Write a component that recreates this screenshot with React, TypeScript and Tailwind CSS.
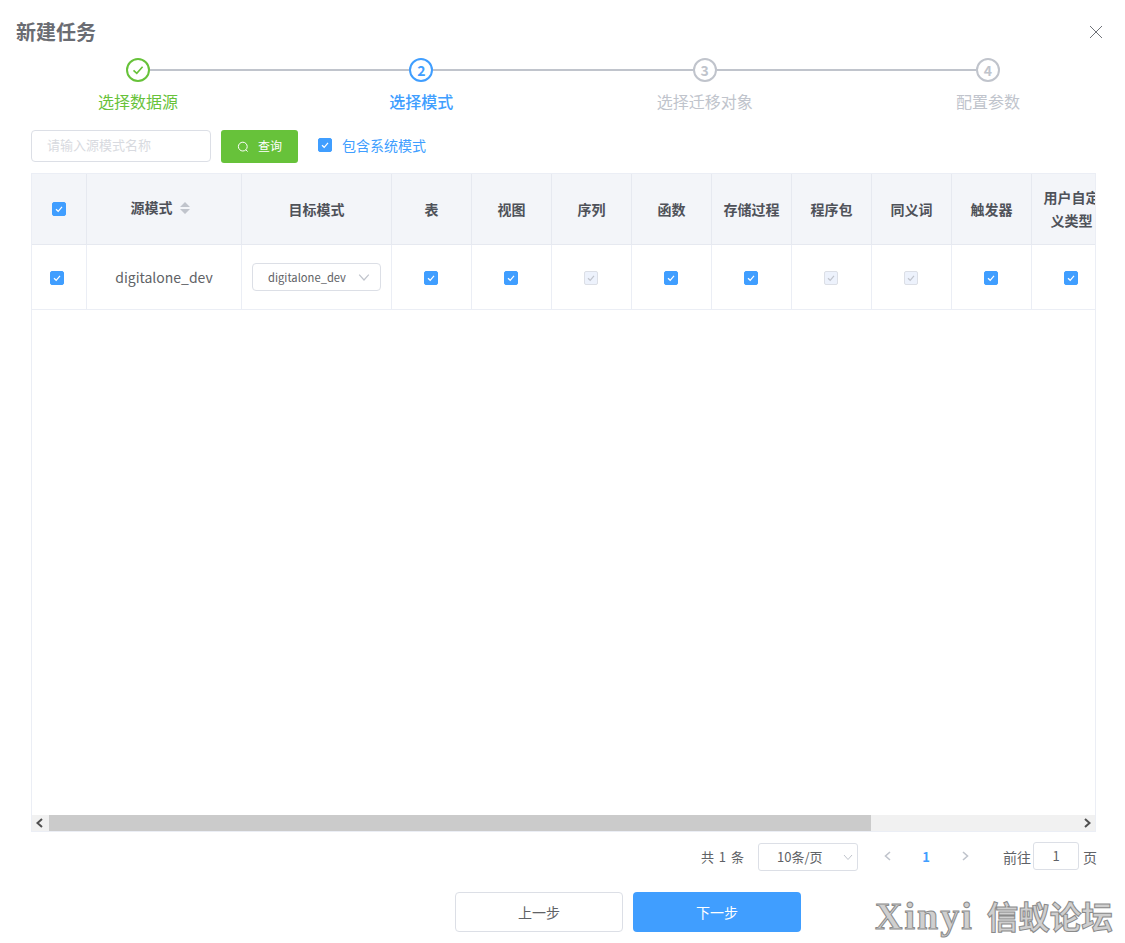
import React from "react";

const FONT = '"Noto Sans CJK SC", sans-serif';

function Box({ kind = "on", className = "" }: { kind?: "on" | "off"; className?: string }) {
  const on = kind === "on";
  return (
    <span
      className={`inline-flex w-[14px] h-[14px] items-center justify-center rounded-[2px] border ${on ? "bg-[#409eff] border-[#409eff]" : "bg-[#edf2fc] border-[#dcdfe6]"} ${className}`}
    >
      <svg width="10" height="10" viewBox="0 0 10 10" fill="none">
        <path d="M2 5.2 L4.2 7.3 L8 2.9" stroke={on ? "#ffffff" : "#c0c4cc"} strokeWidth="1.2" />
      </svg>
    </span>
  );
}

function Chevron({ dir, color, size = 10, width }: { dir: "down" | "left" | "right"; color: string; size?: number; width?: number }) {
  const d = dir === "down" ? "M1 3 L5 7.5 L9 3" : dir === "left" ? "M7 1 L2.5 5 L7 9" : "M3 1 L7.5 5 L3 9";
  return (
    <svg width={size} height={size} viewBox="0 0 10 10" fill="none">
      <path d={d} stroke={color} strokeWidth={width ?? (dir === "down" ? 1 : 1.6)} />
    </svg>
  );
}

function Step({ n, state }: { n: number; state: "done" | "active" | "wait" }) {
  const cls =
    state === "done" ? "border-[#67c23a]" : state === "active" ? "border-[#409eff] text-[#409eff]" : "border-[#c0c4cc] text-[#c0c4cc]";
  return (
    <div className={`w-[24px] h-[24px] shrink-0 rounded-full border-2 bg-white flex items-center justify-center text-[14px] font-bold ${cls}`}>
      {state === "done" ? (
        <svg width="14" height="14" viewBox="0 0 14 14" fill="none">
          <path d="M2.5 7.3 L5.8 10.4 L11.6 3.8" stroke="#67c23a" strokeWidth="1.6" />
        </svg>
      ) : (
        n
      )}
    </div>
  );
}

const headers = ["表", "视图", "序列", "函数", "存储过程", "程序包", "同义词", "触发器", "用户自定义类型"];
const states: ("on" | "off")[] = ["on", "on", "off", "on", "on", "off", "off", "on", "on"];
const headCell = "h-[71px] bg-[#f3f5f9] border-r border-b border-[#e6e9f0] flex items-center justify-center text-center text-[14px] font-bold leading-[23px] text-[#4f5259]";
const bodyCell = "h-[65px] bg-white border-r border-b border-[#ebeef5] flex items-center justify-center";

export default function App() {
  return (
    <div className="relative w-[1125px] h-[943px] bg-white overflow-hidden" style={{ fontFamily: FONT }}>
      <div className="flex items-center justify-between h-[58px] pl-[16px] pr-[22px] pt-[6px]">
        <h1 className="text-[20px] font-bold leading-[28px] text-[#6a6c72]">新建任务</h1>
        <svg width="14" height="14" viewBox="0 0 14 14" fill="none">
          <path d="M1 1 L13 13 M13 1 L1 13" stroke="#6f7278" strokeWidth="1" />
        </svg>
      </div>

      <div className="flex items-center ml-[126px] w-[874px]">
        <Step n={1} state="done" />
        <div className="flex-1 h-[2px] bg-[#c0c4cc]" />
        <Step n={2} state="active" />
        <div className="flex-1 h-[2px] bg-[#c0c4cc]" />
        <Step n={3} state="wait" />
        <div className="flex-1 h-[2px] bg-[#c0c4cc]" />
        <Step n={4} state="wait" />
      </div>
      <div className="flex justify-between ml-[78px] w-[970px] mt-[7px] text-[16px] leading-[24px]">
        <div className="w-[120px] text-center text-[#67c23a]">选择数据源</div>
        <div className="w-[120px] text-center font-medium text-[#409eff]">选择模式</div>
        <div className="w-[120px] text-center text-[#c0c4cc]">选择迁移对象</div>
        <div className="w-[120px] text-center text-[#c0c4cc]">配置参数</div>
      </div>

      <div className="flex items-start mt-[17px] ml-[31px] h-[33px]">
        <div className="w-[180px] h-[32px] rounded-[4px] border border-[#dcdfe6] pl-[15px] pb-[3px] flex items-center text-[13px] text-[#d8dae0]">
          请输入源模式名称
        </div>
        <div className="ml-[10px] w-[77px] h-[33px] rounded-[3px] bg-[#67c23a] flex items-center justify-center gap-[9px] text-[12px] text-white">
          <svg width="12" height="12" viewBox="0 0 12 12" fill="none">
            <circle cx="5.8" cy="5.6" r="4.4" stroke="#fff" strokeWidth="1" />
            <path d="M8.9 8.8 L10.6 10.6" stroke="#fff" strokeWidth="1" />
          </svg>
          <span className="pb-[1px]">查询</span>
        </div>
        <Box className="ml-[20px] mt-[8px]" />
        <span className="ml-[10px] mt-[4px] text-[14px] leading-[22px] text-[#409eff]">包含系统模式</span>
      </div>

      <div className="mt-[10px] ml-[31px] w-[1065px] h-[659px] border border-[#ebeef5] flex flex-col overflow-hidden">
        <div className="flex-1 min-h-0 overflow-hidden">
          <div className="grid w-max grid-cols-[55px_155px_150px_repeat(9,80px)]">
            <div className={headCell}>
              <Box />
            </div>
            <div className={`${headCell} gap-[7px] pr-[8px]`}>
              <span className="-mt-[4px]">源模式</span>
              <svg width="10" height="14" viewBox="0 0 10 14" className="-mt-[3px]">
                <path d="M5 1 L10 6 L0 6 Z M5 13 L10 8 L0 8 Z" fill="#c0c4cc" />
              </svg>
            </div>
            <div className={headCell}>目标模式</div>
            {headers.map((h) => (
              <div key={h} className={`${headCell} px-[11px]`}>
                {h}
              </div>
            ))}

            <div className={`${bodyCell} pr-[4px] pt-[2px]`}>
              <Box />
            </div>
            <div className={`${bodyCell} text-[14px] text-[#606266]`}>digitalone_dev</div>
            <div className={bodyCell}>
              <div className="w-[129px] h-[28px] rounded-[4px] border border-[#dcdfe6] flex items-center pl-[15px] pr-[10px] justify-between text-[11.2px] text-[#606266]">
                <span>digitalone_dev</span>
                <Chevron dir="down" color="#c0c4cc" size={12} />
              </div>
            </div>
            {states.map((s, i) => (
              <div key={i} className={`${bodyCell} pr-[2px] pt-[2px]`}>
                <Box kind={s} />
              </div>
            ))}
          </div>
        </div>

        <div className="h-[16px] flex items-center bg-[#f1f1f1] shrink-0">
          <div className="w-[17px] h-[16px] flex items-center justify-center pr-[2px]">
            <Chevron dir="left" color="#505050" width={2} />
          </div>
          <div className="w-[822px] h-[16px] bg-[#cbcbcb]" />
          <div className="flex-1" />
          <div className="w-[17px] h-[16px] flex items-center justify-center">
            <Chevron dir="right" color="#505050" width={2} />
          </div>
        </div>
      </div>

      <div className="flex items-center justify-end h-[30px] mt-[10px] w-[1097px] text-[13px] text-[#606266]">
        <span className="[word-spacing:2px]">共 1 条</span>
        <div className="ml-[14px] w-[100px] h-[28px] rounded-[3px] border border-[#dcdfe6] flex items-center justify-between pl-[18px] pr-[4px]">
          <span className="text-[13px]">10条/页</span>
          <Chevron dir="down" color="#c0c4cc" size={10} />
        </div>
        <span className="ml-[25px] w-[10px] flex justify-center -mt-[3px]">
          <Chevron dir="left" color="#c0c4cc" />
        </span>
        <span className="ml-[28px] w-[10px] text-center font-bold text-[#409eff]">1</span>
        <span className="ml-[29px] w-[10px] flex justify-center -mt-[3px]">
          <Chevron dir="right" color="#c0c4cc" />
        </span>
        <span className="ml-[33px] text-[14px]">前往</span>
        <div className="ml-[2px] -mt-[2px] w-[46px] h-[28px] rounded-[3px] border border-[#dcdfe6] flex items-center justify-center">1</div>
        <span className="ml-[4px] text-[14px]">页</span>
      </div>

      <div className="flex mt-[20px] ml-[455px] gap-[10px] text-[14px]">
        <div className="w-[168px] h-[40px] rounded-[4px] border border-[#dcdfe6] flex items-center justify-center text-[#606266]">上一步</div>
        <div className="w-[168px] h-[40px] rounded-[4px] bg-[#409eff] flex items-center justify-center text-white">下一步</div>
      </div>

      <div
        className="absolute left-[875px] top-[894px] flex items-baseline whitespace-nowrap font-bold leading-[44px] text-[#cfcfcf] [-webkit-text-stroke:1px_#8a8a8a]"
        style={{ fontFamily: '"Liberation Serif", "Noto Sans CJK SC", serif' }}
      >
        <span className="text-[38px] tracking-[2px]">Xinyi</span>
        <span className="ml-[13px] text-[31.5px]">信蚁论坛</span>
      </div>
    </div>
  );
}
